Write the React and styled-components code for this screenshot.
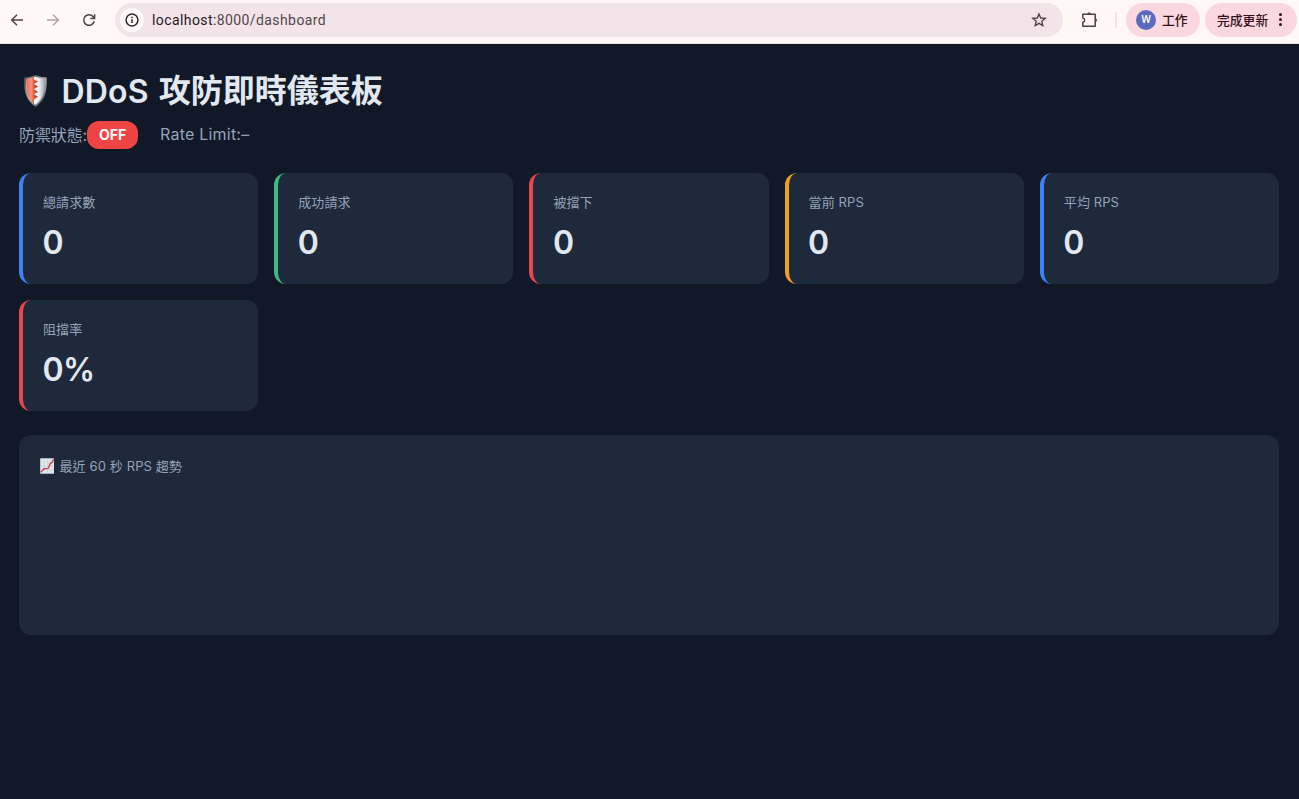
import React from "react";
import styled, { createGlobalStyle } from "styled-components";

const stats = [
    { id: "total", label: "總請求數", value: "0", color: "#3b82f6" },
    { id: "success", label: "成功請求", value: "0", color: "#3fb984" },
    { id: "blocked", label: "被擋下", value: "0", color: "#e5484d" },
    { id: "rps", label: "當前 RPS", value: "0", color: "#f0a020" },
    { id: "avg", label: "平均 RPS", value: "0", color: "#3b82f6" },
    { id: "rate", label: "阻擋率", value: "0%", color: "#e5484d" },
];

const BackIcon = () => (
    <svg width="16" height="16" viewBox="0 0 16 16" fill="none" stroke="currentColor" strokeWidth="1.5">
        <path d="M14 8H3M8 2.7 2.7 8 8 13.3" />
    </svg>
);

const ForwardIcon = () => (
    <svg width="16" height="16" viewBox="0 0 16 16" fill="none" stroke="currentColor" strokeWidth="1.5">
        <path d="M2 8h11M8 2.7 13.3 8 8 13.3" />
    </svg>
);

const ReloadIcon = () => (
    <svg width="16" height="16" viewBox="0 0 16 16" fill="none" stroke="currentColor" strokeWidth="1.5">
        <path d="M13.2 9.3A5.3 5.3 0 1 1 12.4 5L13.4 6.2M13.6 2.2v4.3H9.3" />
    </svg>
);

const InfoIcon = () => (
    <svg width="16" height="16" viewBox="0 0 16 16" fill="none" stroke="currentColor" strokeWidth="1.5">
        <circle cx="8" cy="8" r="5.9" />
        <path d="M8 7.3v3.8M8 4.7v1.5" />
    </svg>
);

const StarIcon = () => (
    <svg width="16" height="16" viewBox="0 0 16 16" fill="none" stroke="currentColor" strokeWidth="1.35">
        <path d="M8 1.9 9.7 6l4.5.4-3.4 2.9 1 4.4L8 11.4l-3.8 2.3 1-4.4-3.4-2.9L6.3 6z" />
    </svg>
);

const PuzzleIcon = () => (
    <svg width="18" height="18" viewBox="0 0 18 18" fill="none" stroke="currentColor" strokeWidth="1.5" strokeLinejoin="round">
        <path d="M1.8 3.2h12.4v12H1.8v-3.7c2.5-.6 2.5-4 0-4.6z" />
        <path d="M6.5 2.8a1.7 1.7 0 0 1 3.2 0zM14.6 7.6a1.7 1.7 0 0 1 0 3.2z" fill="currentColor" strokeWidth="0.6" />
    </svg>
);

const ShieldIcon = () => (
    <svg width="23" height="32" viewBox="1.7 0.5 22.6 32.8" preserveAspectRatio="none">
        <defs>
            <linearGradient id="rim" x1="0" x2="1" y1="0" y2="1">
                <stop offset="0" stopColor="#4d4b50" />
                <stop offset="0.5" stopColor="#aaa5a4" />
                <stop offset="1" stopColor="#55565b" />
            </linearGradient>
            <linearGradient id="steel" x1="0" x2="1">
                <stop offset="0.4" stopColor="#ffffff" />
                <stop offset="0.7" stopColor="#e9edf1" />
                <stop offset="1" stopColor="#98a1ab" />
            </linearGradient>
            <linearGradient id="red" x1="0" x2="1">
                <stop offset="0" stopColor="#e5735f" />
                <stop offset="0.45" stopColor="#f58f79" />
                <stop offset="0.7" stopColor="#d9523e" />
                <stop offset="1" stopColor="#b93524" />
            </linearGradient>
        </defs>
        <path d="M13 .8C9.3 2 5.6 2.9 2 3.1 1.5 15 2.5 26 13 33 23.5 26 24.5 15 24 3.1 20.4 2.9 16.7 2 13 .8z" fill="url(#rim)" />
        <path d="M13 2.6C10 3.6 7 4.4 3.8 4.7 3.5 15 4.3 24.5 13 30.8 21.7 24.5 22.5 15 22.2 4.7 19 4.4 16 3.6 13 2.6z" fill="url(#steel)" />
        <path d="M11.5 3.1C9.5 3.8 6.8 4.5 3.8 4.7 3.5 15 4.3 24.5 11.5 29.6V25.500l4-2.700-4-2.500 4-2.700-4-2.600 4-2.700-4-2.600 4-2.500-4-2.200z" fill="url(#red)" />
    </svg>
);

const ChartIcon = () => (
    <svg width="16" height="16" viewBox="0 0 16 16">
        <rect x="0.2" y="0.3" width="13.8" height="15.4" fill="#dfe9ed" />
        <path d="M4 .3v15.4M7.5.3v15.4M11 .3v15.4M.2 4H14M.2 8H14M.2 12H14" stroke="#bccbd2" strokeWidth="0.5" />
        <path d="M.8 14.300 3.700 10.800 8.300 10.300 10.300 5.500 12 4.300 13.600 1.200" fill="none" stroke="#c33440" strokeWidth="1.200" />
    </svg>
);

const StatCard = ({ label, value, color }) => {
    return (
    <CardStyled $color={color}>
        <Label>{label}</Label>
        <Value>{value}</Value>
    </CardStyled>
    );
}

const App = () => {
    return (
    <>
        <GlobalStyle />
        <Toolbar>
            <NavButton><BackIcon /></NavButton>
            <NavButton $disabled><ForwardIcon /></NavButton>
            <NavButton><ReloadIcon /></NavButton>
            <AddressBar>
                <SiteInfo><InfoIcon /></SiteInfo>
                <Url><b>localhost:</b>8000/dashboard</Url>
                <StarIcon />
            </AddressBar>
            <Extensions><PuzzleIcon /></Extensions>
            <Divider />
            <ProfileChip>
                <Avatar>W</Avatar>
                工作
            </ProfileChip>
            <UpdateChip>
                完成更新
                <Dots><i /><i /><i /></Dots>
            </UpdateChip>
        </Toolbar>
        <Dashboard>
            <Title>
                <ShieldIcon />
                <TitleLatin>DDoS</TitleLatin>
                <span>攻防即時儀表板</span>
            </Title>
            <StatusBar>
                <StatusLabel>防禦狀態:</StatusLabel>
                <Badge>OFF</Badge>
                <RateLimit>Rate Limit:–</RateLimit>
            </StatusBar>
            <Cards>
                {stats.map(stat => <StatCard key={stat.id} {...stat} />)}
            </Cards>
            <ChartPanel>
                <ChartTitle>
                    <ChartIcon />
                    最近 60 秒 RPS 趨勢
                </ChartTitle>
            </ChartPanel>
        </Dashboard>
    </>
    );
}

const GlobalStyle = createGlobalStyle`
    * {
        box-sizing: border-box;
    }

    body {
        margin: 0;
        background: #111827;
        color: #e2e8f0;
        font-family: Inter, "Noto Sans CJK TC", sans-serif;
    }

    svg {
        display: block;
        flex: none;
    }
`;

const Toolbar = styled.header`
    display: flex;
    align-items: center;
    height: 44px;
    padding: 0 2px 4px 9px;
    background: #fff8f6;
    border-bottom: 1px solid #ece0e2;
    color: #50403f;
`;

const NavButton = styled.span`
    width: 36px;
    color: ${({ $disabled }) => $disabled ? "#b0a5a4" : "#50403f"};
`;

const AddressBar = styled.div`
    display: flex;
    align-items: center;
    width: 948px;
    height: 34px;
    margin-left: -2px;
    padding: 0 16px 0 5px;
    border-radius: 17px;
    background: #f2e5e9;
`;

const SiteInfo = styled.span`
    display: grid;
    place-items: center;
    width: 24px;
    height: 24px;
    border-radius: 50%;
    background: #fff8f8;
    color: #30272a;
`;

const Url = styled.span`
    flex: 1;
    margin-left: 8px;
    font-family: Roboto, sans-serif;
    font-size: 14px;
    letter-spacing: 0.41px;
    color: #54464a;

    b {
        font-weight: 400;
        color: #27191d;
    }
`;

const Extensions = styled.span`
    margin-left: 18px;
`;

const Divider = styled.span`
    width: 2px;
    height: 16px;
    margin: 0 9px 0 16px;
    background: #f7dfe3;
`;

const Chip = styled.div`
    display: flex;
    align-items: center;
    height: 34px;
    border-radius: 17px;
    background: #fbd8df;
    color: #33101a;
    font-family: "Noto Sans CJK TC", sans-serif;
    font-size: 12.8px;
    font-weight: 500;
`;

const ProfileChip = styled(Chip)`
    width: 74px;
    padding-left: 10px;
    gap: 6px;
`;

const UpdateChip = styled(Chip)`
    width: 92px;
    margin-left: 5px;
    padding-left: 12px;
    gap: 11px;
`;

const Avatar = styled.span`
    display: grid;
    place-items: center;
    width: 20px;
    height: 20px;
    border-radius: 50%;
    background: #5c6bc0;
    color: #fff;
    font-family: Roboto, sans-serif;
    font-size: 11px;
`;

const Dots = styled.span`
    display: grid;
    gap: 2px;

    i {
        width: 3px;
        height: 3px;
        border-radius: 50%;
        background: #33101a;
    }
`;

const Dashboard = styled.main`
    padding: 24px 20px 0 19px;
`;

const Title = styled.h1`
    display: flex;
    align-items: center;
    height: 45px;
    margin: 0;
    padding-left: 5px;
    font-size: 32px;
    font-weight: 700;
    line-height: 45px;
`;

const TitleLatin = styled.span`
    margin: 0 10px 0 14.5px;
    padding-top: 1px;
    font-weight: 600;
    letter-spacing: 0.15px;
`;

const StatusBar = styled.div`
    display: flex;
    align-items: center;
    height: 28px;
    margin-top: 8px;
    color: #94a3b8;
    font-size: 16px;
`;

const StatusLabel = styled.span`
    width: 68px;
    padding-bottom: 3px;
    letter-spacing: -0.1px;
    white-space: nowrap;
`;

const Badge = styled.span`
    width: 51px;
    height: 28px;
    border-radius: 12px;
    background: #ef4444;
    color: #fff;
    font-size: 14px;
    font-weight: 700;
    line-height: 28px;
    text-align: center;
`;

const RateLimit = styled.span`
    margin-left: 22px;
    padding-bottom: 2px;
    letter-spacing: 0.22px;
`;

const Cards = styled.section`
    display: grid;
    grid-template-columns: repeat(auto-fit, minmax(220px, 1fr));
    gap: 16px;
    margin-top: 24px;
`;

const CardStyled = styled.div`
    height: 111px;
    padding: 20px;
    border-left: 4px solid ${({ $color }) => $color};
    border-radius: 12px;
    background: #1e293b;
`;

const Label = styled.div`
    color: #94a3b8;
    font-size: 13px;
    line-height: 18px;
    letter-spacing: 0.1px;
`;

const Value = styled.div`
    margin-top: 9px;
    margin-left: -0.5px;
    font-size: 32px;
    font-weight: 600;
    line-height: 45px;
    letter-spacing: -0.5px;
`;

const ChartPanel = styled.section`
    height: 200px;
    margin-top: 24px;
    padding: 20px;
    border-radius: 12px;
    background: #1e293b;
`;

const ChartTitle = styled.div`
    display: flex;
    align-items: center;
    gap: 4px;
    height: 21px;
    padding-left: 0.5px;
    color: #94a3b8;
    font-size: 13px;
    letter-spacing: 0.12px;
`;

export default App;
